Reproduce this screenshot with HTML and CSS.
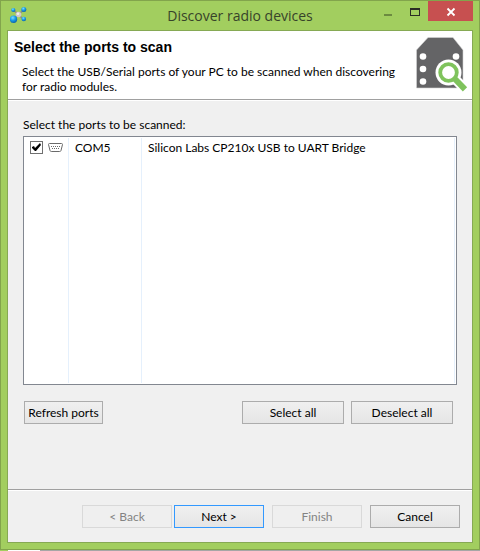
FILE: index.html
```html
<!DOCTYPE html>
<html lang="en">
<head>
<meta charset="utf-8">
<title>Discover radio devices</title>
<link rel="stylesheet" href="styles.css">
</head>
<body>
<div class="window">
  <header class="titlebar">
    <svg class="app-icon" viewBox="0 0 17 17" aria-hidden="true">
      <defs>
        <radialGradient id="ball" cx="40%" cy="30%" r="70%">
          <stop offset="0" stop-color="#7fdcff"/>
          <stop offset="0.5" stop-color="#1a9fe8"/>
          <stop offset="1" stop-color="#0b62ad"/>
        </radialGradient>
      </defs>
      <path d="M3.500 3 8.500 7.500 14 2.500M3.500 12 8.500 7.500 13.500 12.500" fill="none" stroke="#8f8a88" stroke-width="1.600"/>
      <circle cx="8.500" cy="7.500" r="2.800" fill="#cfc8cb"/>
      <circle cx="8" cy="6.800" r="1.300" fill="#f2eef0"/>
      <circle cx="3.300" cy="3" r="2.100" fill="url(#ball)"/>
      <circle cx="13.800" cy="2.500" r="2.500" fill="url(#ball)"/>
      <circle cx="13.800" cy="12" r="2.300" fill="url(#ball)"/>
      <circle cx="3.500" cy="12.300" r="3.700" fill="url(#ball)"/>
    </svg>
    <h1 class="window-title">Discover radio devices</h1>
    <div class="window-controls">
      <button class="control" type="button" aria-label="Minimize"><svg class="control-icon" viewBox="0 0 11 11"><path d="M2 8h8v2H2z" fill="#6c8a40"/></svg></button>
      <button class="control" type="button" aria-label="Maximize"><svg class="control-icon" viewBox="0 0 11 11"><path d="M1 2h10v8H1zM2 4v5h8V4z" fill="#2a2d25" fill-rule="evenodd"/></svg></button>
      <button class="control close" type="button" aria-label="Close"><svg class="control-icon" viewBox="0 0 11 11"><path d="m2.500 2.500 7 7M9.500 2.500l-7 7" stroke="#fff" stroke-width="1.800"/></svg></button>
    </div>
  </header>
  <main class="dialog">
    <section class="banner">
      <div class="banner-text">
        <h2 class="banner-title">Select the ports to scan</h2>
        <p class="banner-description">Select the USB/Serial ports of your PC to be scanned when discovering for radio modules.</p>
      </div>
      <svg class="banner-icon" viewBox="0 0 52 56" aria-hidden="true">
        <path d="M12 0.500h25L47 13v38H.500V13z" fill="#646466" stroke="#d5d5d5" stroke-width=".6"/>
        <g fill="#fff">
          <circle cx="7" cy="19.500" r="3.300"/><circle cx="7" cy="32" r="3.300"/><circle cx="7" cy="44.500" r="3.300"/><circle cx="40" cy="19.500" r="3.300"/>
          <circle cx="32.500" cy="35.500" r="13"/>
        </g>
        <path d="m39 42 12 12" stroke="#fff" stroke-width="10"/>
        <path d="m38.500 41.500 10.500 10.800" stroke="#7fc35c" stroke-width="6"/>
        <circle cx="32.500" cy="35.500" r="8.300" fill="#fff" stroke="#7fc35c" stroke-width="3.800"/>
      </svg>
    </section>
    <section class="content">
      <p class="list-label" id="ports-label">Select the ports to be scanned:</p>
      <div class="list">
        <table class="ports" aria-labelledby="ports-label">
          <tbody>
            <tr>
              <td class="col-check">
                <label class="port-check">
                  <input class="checkbox" type="checkbox" aria-label="COM5" checked>
                  <svg class="port-icon" viewBox="0 0 15 9" aria-hidden="true">
                    <path d="M1.500.500h12q1 0 1 1l-1.500 6q-.3 1-1.300 1H3.300q-1 0-1.300-1l-1.500-6q0-1 1-1z" fill="#fff" stroke="#6a6a6a"/>
                    <path d="M3 3.500h1M5 3.500h1M7 3.500h1M9 3.500h1M11 3.500h1M4 5.500h1M6 5.500h1M8 5.500h1M10 5.500h1" stroke="#6a6a6a"/>
                  </svg>
                </label>
              </td>
              <td class="col-port">COM5</td>
              <td class="col-name">Silicon Labs CP210x USB to UART Bridge</td>
            </tr>
          </tbody>
        </table>
      </div>
      <div class="list-actions">
        <button class="button compact" type="button">Refresh ports</button>
        <div class="selection-actions">
          <button class="button wide" type="button">Select all</button>
          <button class="button wide" type="button">Deselect all</button>
        </div>
      </div>
    </section>
    <footer class="wizard-actions">
      <div class="step-actions">
        <button class="button" type="button" disabled>&lt; Back</button>
        <button class="button primary" type="button">Next &gt;</button>
      </div>
      <button class="button" type="button" disabled>Finish</button>
      <button class="button" type="button">Cancel</button>
    </footer>
  </main>
</div>
<div class="backdrop"></div>
</body>
</html>
```
FILE: styles.css
```css
* {
  box-sizing: border-box;
}

body {
  margin: 0;
  min-height: 100vh;
  display: flex;
  flex-direction: column;
  font: 12px/15px Lato, "Open Sans", sans-serif;
  color: #000;
}

h1,
h2,
p {
  margin: 0;
}

.window {
  flex: 1;
  display: flex;
  flex-direction: column;
  padding: 0 6px 6px;
  background: #a2ce5f;
  border: 1px solid #82a44c;
}

.titlebar {
  display: grid;
  grid-template-columns: 1fr auto 1fr;
  height: 29px;
}

.app-icon {
  width: 17px;
  height: 17px;
  margin: 6px 0 0 3px;
}

.window-title {
  font: 14px/29px "Open Sans", "Noto Sans", sans-serif;
  color: #37432a;
  white-space: nowrap;
}

.window-controls {
  display: flex;
  justify-content: flex-end;
}

.control {
  display: flex;
  align-items: center;
  justify-content: center;
  width: 27px;
  height: 20px;
  padding: 0;
  border: 0;
  background: none;
}

.control-icon {
  width: 11px;
  height: 11px;
}

.close {
  width: 45px;
  background: #c75050;
}

.dialog {
  flex: 1;
  display: flex;
  flex-direction: column;
  border: 1px solid #86a954;
  background: #f0f0f0;
}

.banner {
  display: flex;
  justify-content: space-between;
  gap: 16px;
  padding: 6px 4px 5px 6px;
  background: #fff;
  border-bottom: 1px solid #a0a0a0;
}

.banner-title {
  margin-top: 2px;
  font: bold 14px/16px "Liberation Sans", sans-serif;
}

.banner-description {
  margin: 9px 0 0 8px;
}

.banner-icon {
  flex: none;
  width: 52px;
  height: 56px;
}

.content {
  flex: 1;
  display: flex;
  flex-direction: column;
  padding: 16px 15px 65px;
  border-top: 1px solid #fff;
}

.list-label {
  margin-bottom: 4px;
}

.list {
  flex: 1;
  display: flex;
  padding: 1px;
  background: #fff;
  border: 1px solid #828790;
}

.ports {
  flex: 1;
  border-collapse: separate;
  border-spacing: 0;
  table-layout: fixed;
  width: 100%;
}

.ports td {
  padding: 2px 6px;
  vertical-align: top;
  border-right: 1px solid #e5f0fc;
}

.ports .col-check {
  width: 44px;
  padding: 3px 5px;
}

.col-port {
  width: 73px;
}

.port-check {
  display: flex;
  align-items: center;
  gap: 5px;
}

.checkbox {
  appearance: none;
  flex: none;
  width: 13px;
  height: 13px;
  margin: 0;
  border: 1px solid #707070;
  background: #fff;
}

.checkbox:checked::before {
  content: "";
  display: block;
  width: 11px;
  height: 11px;
  background: #000;
  clip-path: polygon(1px 5px, 3px 4px, 4px 6px, 9px 1px, 10px 3px, 5px 9px, 4px 9px, 1px 6px);
}

.port-icon {
  flex: none;
  width: 15px;
  height: 9px;
}

.list-actions {
  display: flex;
  justify-content: space-between;
  margin-top: 16px;
  padding: 0 4px 0 1px;
}

.selection-actions {
  display: flex;
  gap: 7px;
}

.button {
  width: 90px;
  height: 23px;
  padding: 0;
  font: inherit;
  color: #000;
  white-space: nowrap;
  background: linear-gradient(#f0f0f0, #e5e5e5);
  border: 1px solid #acacac;
}

.button.compact {
  width: 79px;
}

.button.wide {
  width: 102px;
}

.button.primary {
  border-color: #3399ff;
}

.button:disabled {
  color: #838383;
  background: #efefef;
  border-color: #d9d9d9;
}

.wizard-actions {
  display: flex;
  justify-content: flex-end;
  gap: 8px;
  padding: 15px 12px 14px;
  border-top: 1px solid #a0a0a0;
  box-shadow: inset 0 1px #fff;
}

.step-actions {
  display: flex;
  gap: 2px;
}

.backdrop {
  height: 1px;
  background: linear-gradient(to right, #a2ce5f 8px, #fff 8px 40px, #a6a6a6 40px);
}
```
